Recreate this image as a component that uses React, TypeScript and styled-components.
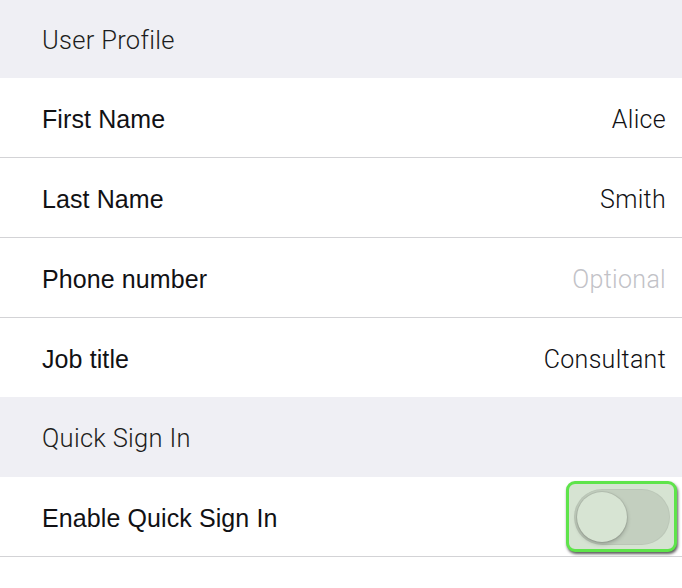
import React, { useState } from 'react'
import styled, { createGlobalStyle } from 'styled-components'

const Global = createGlobalStyle`
  body {
    margin: 0;
    background: #ffffff;
    font-family: "Liberation Sans", Arial, sans-serif;
    -webkit-font-smoothing: antialiased;
  }
`

const Page = styled.div`
  width: 682px;
  height: 588px;
  overflow: hidden;
  background: #ffffff;
`

const SectionHeader = styled.div<{ $h: number }>`
  height: ${p => p.$h}px;
  display: flex;
  align-items: center;
  padding: 2px 0 0 42px;
  box-sizing: border-box;
  background: #efeff4;
  color: #1d1d20;
  font-family: Roboto, "Liberation Sans", sans-serif;
  font-size: 25.5px;
  font-weight: 300;
  letter-spacing: 0.3px;
`

const Row = styled.div<{ $last?: boolean }>`
  height: 75px;
  display: flex;
  align-items: center;
  justify-content: space-between;
  padding: 4px 16px 0 42px;
  background: #ffffff;
  border-bottom: ${p => (p.$last ? 'none' : '1px solid #d3d3d6')};
`

const Label = styled.span`
  font-size: 25px;
  color: #111114;
  letter-spacing: 0.1px;
`

const Value = styled.span<{ $placeholder?: boolean }>`
  font-family: Roboto, "Liberation Sans", sans-serif;
  font-size: 25px;
  font-weight: 300;
  letter-spacing: 0.3px;
  color: ${p => (p.$placeholder ? '#c2c2c7' : '#111114')};
`

const Focus = styled.button`
  margin: -4px -11px 0 0;
  width: 111px;
  height: 71px;
  padding: 0;
  display: flex;
  align-items: center;
  justify-content: center;
  box-sizing: border-box;
  border: 3px solid #5ee44a;
  border-radius: 9px;
  background: #d6e3d2;
  box-shadow: 1px 2px 3px rgba(0, 0, 0, 0.65);
  cursor: pointer;
`

const Track = styled.span<{ $on: boolean }>`
  position: relative;
  display: block;
  width: 96px;
  height: 56px;
  border-radius: 28px;
  background: ${p => (p.$on ? '#8fd483' : '#c3cfbf')};
  box-shadow: inset 0 0 0 1px rgba(0, 0, 0, 0.04);
`

const Knob = styled.span<{ $on: boolean }>`
  position: absolute;
  top: 3px;
  left: ${p => (p.$on ? '43px' : '3px')};
  width: 50px;
  height: 50px;
  border-radius: 50%;
  background: #d7e4d3;
  box-shadow: 0 2px 4px rgba(0, 0, 0, 0.25), 0 0 0 1px rgba(0, 0, 0, 0.06);
  transition: left 0.2s;
`

const fields = [
  { label: 'First Name', value: 'Alice' },
  { label: 'Last Name', value: 'Smith' },
  { label: 'Phone number', value: 'Optional', placeholder: true },
  { label: 'Job title', value: 'Consultant' },
]

export default function App() {
  const [quick, setQuick] = useState(false)

  return (
    <Page>
      <Global />
      <SectionHeader $h={78}>User Profile</SectionHeader>
      {fields.map((f, i) => (
        <Row key={f.label} $last={i === fields.length - 1}>
          <Label>{f.label}</Label>
          <Value $placeholder={f.placeholder}>{f.value}</Value>
        </Row>
      ))}
      <SectionHeader $h={80}>Quick Sign In</SectionHeader>
      <Row>
        <Label>Enable Quick Sign In</Label>
        <Focus onClick={() => setQuick(!quick)} aria-pressed={quick}>
          <Track $on={quick}>
            <Knob $on={quick} />
          </Track>
        </Focus>
      </Row>
    </Page>
  )
}
